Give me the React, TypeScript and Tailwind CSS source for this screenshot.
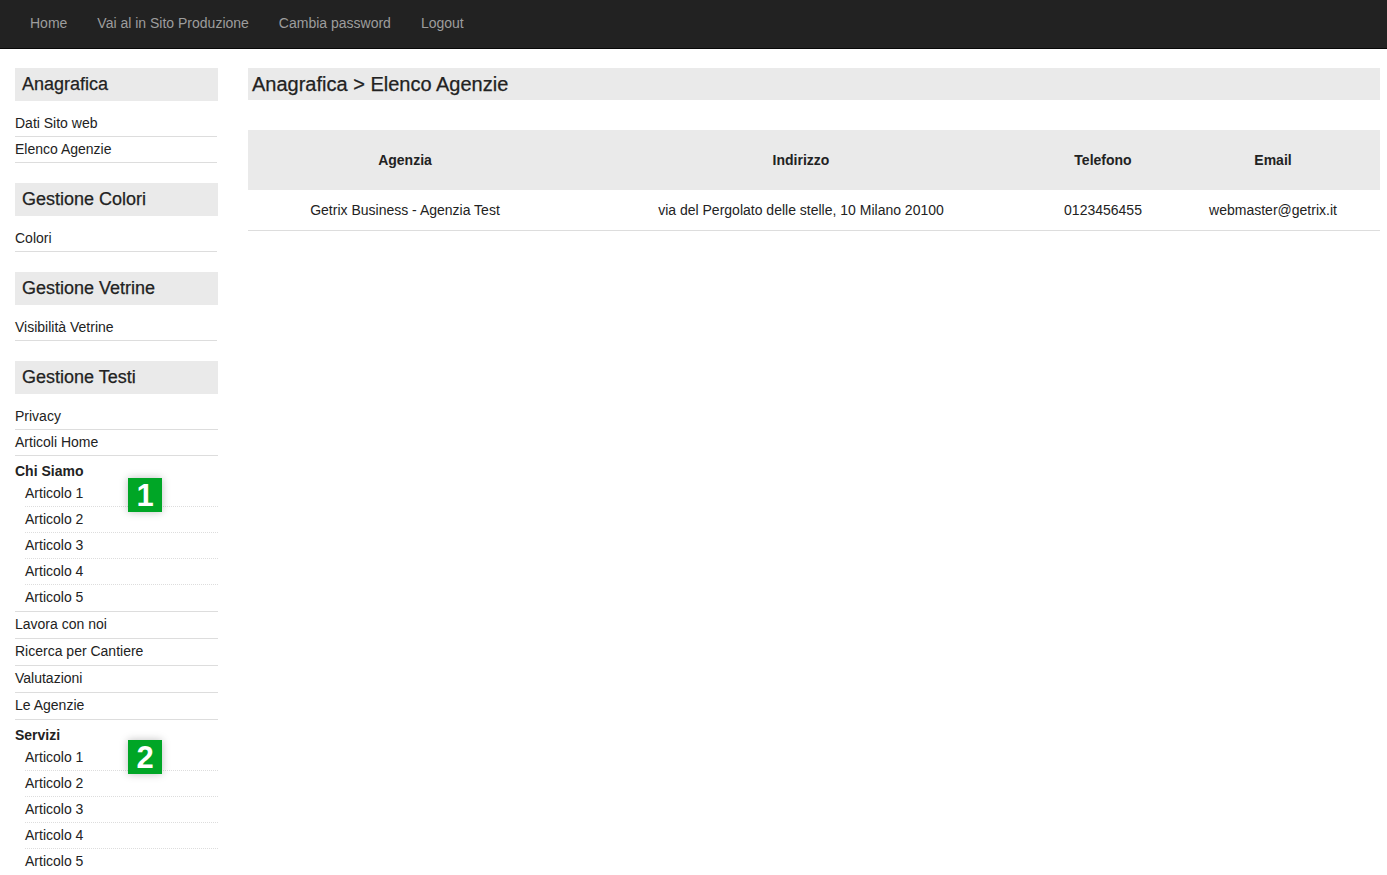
import React from "react";

const font = { fontFamily: '"Liberation Sans", Arial, sans-serif' };

function Heading({ children }: { children: React.ReactNode }) {
  return (
    <div className="h-[33px] bg-[#eaeaea] pl-[7px] text-[18px] leading-[33px] text-[#222] [-webkit-text-stroke:0.25px_#222]">
      {children}
    </div>
  );
}

function Item({ children, tall = false }: { children: React.ReactNode; tall?: boolean }) {
  return (
    <li
      className={`${tall ? "h-[27px] leading-[25px]" : "h-[26px] leading-[25px]"} border-b border-[#dddddd] text-[14px] text-[#222]`}
    >
      {children}
    </li>
  );
}

function Badge({ n, top }: { n: string; top: "a" | "b" }) {
  return (
    <div
      className={`absolute left-[113px] ${top === "a" ? "top-[-3px]" : "top-[-5px]"} flex h-[34px] w-[34px] items-center justify-center bg-[#00a626] text-[31px] font-bold leading-none text-white shadow-[0_0_8px_rgba(0,0,0,0.25)]`}
    >
      {n}
    </div>
  );
}

function Group({ title, badge, top }: { title: string; badge: string; top: "a" | "b" }) {
  const subs = ["Articolo 1", "Articolo 2", "Articolo 3", "Articolo 4", "Articolo 5"];
  return (
    <li className="border-b border-[#dddddd] text-[14px] text-[#222]">
      <div className="pt-[5px] text-[14px] font-bold leading-[20px]">{title}</div>
      <ul className="relative pl-[10px]">
        <Badge n={badge} top={top} />
        {subs.map((s, i) => (
          <li
            key={s}
            className={`h-[26px] leading-[25px] ${i < subs.length - 1 ? "border-b border-dotted border-[#dddddd]" : ""}`}
          >
            {s}
          </li>
        ))}
      </ul>
    </li>
  );
}

export default function App() {
  return (
    <div className="min-h-screen bg-white text-[#333]" style={font}>
      <nav className="h-[49px] border-b border-[#080808] bg-[#222222]">
        <ul className="flex pl-[15px] text-[14px] leading-[47px] text-[#9d9d9d]">
          <li className="px-[15px]">Home</li>
          <li className="px-[15px]">Vai al in Sito Produzione</li>
          <li className="px-[15px]">Cambia password</li>
          <li className="px-[15px]">Logout</li>
        </ul>
      </nav>

      <div className="flex pt-[19px]">
        <aside className="ml-[15px] w-[203px] shrink-0">
          <Heading>Anagrafica</Heading>
          <ul className="mb-[20px] mt-[10px] mr-[1px]">
            <Item>Dati Sito web</Item>
            <Item>Elenco Agenzie</Item>
          </ul>

          <Heading>Gestione Colori</Heading>
          <ul className="mb-[20px] mt-[10px] mr-[1px]">
            <Item>Colori</Item>
          </ul>

          <Heading>Gestione Vetrine</Heading>
          <ul className="mb-[20px] mt-[10px] mr-[1px]">
            <Item>Visibilità Vetrine</Item>
          </ul>

          <Heading>Gestione Testi</Heading>
          <ul className="mt-[10px]">
            <Item>Privacy</Item>
            <Item>Articoli Home</Item>
            <Group title="Chi Siamo" badge="1" top="a" />
            <Item tall>Lavora con noi</Item>
            <Item tall>Ricerca per Cantiere</Item>
            <Item tall>Valutazioni</Item>
            <Item tall>Le Agenzie</Item>
            <Group title="Servizi" badge="2" top="b" />
          </ul>
        </aside>

        <main className="ml-[30px] w-[1132px] shrink-0">
          <div className="h-[32px] bg-[#eaeaea] pl-[4px] text-[20px] leading-[33px] text-[#222] [-webkit-text-stroke:0.25px_#222]">
            Anagrafica &gt; Elenco Agenzie
          </div>
          <table className="mt-[30px] w-[1132px] table-fixed border-collapse text-[14px] text-[#222]">
            <colgroup>
              <col className="w-[314px]" />
              <col className="w-[478px]" />
              <col className="w-[126px]" />
              <col className="w-[214px]" />
            </colgroup>
            <thead>
              <tr className="h-[60px] bg-[#eaeaea] font-bold">
                <th className="text-center">Agenzia</th>
                <th className="text-center">Indirizzo</th>
                <th className="text-center">Telefono</th>
                <th className="text-center">Email</th>
              </tr>
            </thead>
            <tbody>
              <tr className="h-[40px] border-b border-[#dddddd]">
                <td className="pt-[2px] text-center">Getrix Business - Agenzia Test</td>
                <td className="pt-[2px] text-center">via del Pergolato delle stelle, 10 Milano 20100</td>
                <td className="pt-[2px] text-center">0123456455</td>
                <td className="pt-[2px] text-center">webmaster@getrix.it</td>
              </tr>
            </tbody>
          </table>
        </main>
      </div>
    </div>
  );
}
